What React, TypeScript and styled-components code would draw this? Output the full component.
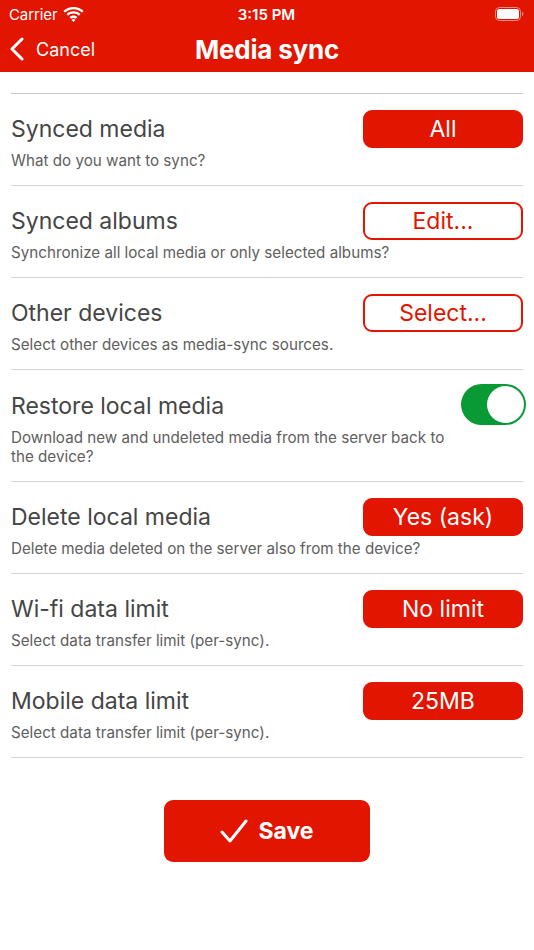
import React, { useState } from 'react';
import styled, { createGlobalStyle } from 'styled-components';

const GlobalStyle = createGlobalStyle`
  html, body {
    margin: 0;
    padding: 0;
    background: #ffffff;
  }
  body {
    font-family: Inter, "Noto Sans", "Liberation Sans", sans-serif;
    -webkit-font-smoothing: antialiased;
  }
  * {
    box-sizing: border-box;
  }
`;

const RED = '#e21500';

const Screen = styled.div`
  width: 534px;
  min-height: 950px;
  display: flex;
  flex-direction: column;
  background: #fff;
`;

const Header = styled.div`
  background: ${RED};
  color: white;
  height: 72px;
  display: flex;
  flex-direction: column;
`;

const StatusBar = styled.div`
  height: 28px;
  display: grid;
  grid-template-columns: 1fr auto 1fr;
  align-items: center;
  padding: 0 10px 0 9px;
  font-size: 15px;
`;

const Carrier = styled.div`
  display: flex;
  align-items: center;
  gap: 6px;
  letter-spacing: -0.1px;
`;

const Clock = styled.div`
  font-weight: 600;
  font-size: 15px;
`;

const BatteryWrap = styled.div`
  justify-self: end;
  display: flex;
  align-items: center;
`;

const NavBar = styled.div`
  flex: 1;
  display: grid;
  grid-template-columns: 1fr auto 1fr;
  align-items: center;
  padding: 0 10px 2px;
`;

const BackButton = styled.button`
  background: none;
  border: none;
  color: white;
  font-family: inherit;
  font-size: 18px;
  display: flex;
  align-items: center;
  gap: 12px;
  padding: 0;
  justify-self: start;
`;

const NavTitle = styled.h1`
  margin: 0;
  font-size: 26px;
  font-weight: 700;
  letter-spacing: -0.2px;
`;

const List = styled.div`
  margin: 21px 11px 0;
  border-top: 1px solid #c9c9c9;
`;

const Row = styled.div`
  padding: 16px 0 15px;
  border-bottom: 1px solid #d4d4d4;
`;

const RowTop = styled.div<{ $tall?: boolean }>`
  display: flex;
  align-items: center;
  justify-content: space-between;
  height: ${p => (p.$tall ? '39px' : '38px')};
`;

const Title = styled.div`
  font-size: 23px;
  color: #454545;
`;

const Subtitle = styled.div`
  margin-top: 3px;
  font-size: 15.2px;
  line-height: 19px;
  color: #5e5e5e;
  max-width: 445px;
`;

const ValueButton = styled.button<{ $outline?: boolean }>`
  width: 160px;
  height: 38px;
  border-radius: 9px;
  font-family: inherit;
  font-size: 23px;
  cursor: pointer;
  background: ${p => (p.$outline ? '#fff' : RED)};
  color: ${p => (p.$outline ? RED : '#fff')};
  border: 2px solid ${RED};
  padding: 0;
`;

const Switch = styled.button<{ $on: boolean }>`
  width: 65px;
  height: 41px;
  flex-shrink: 0;
  border-radius: 21px;
  border: none;
  padding: 2px;
  margin: -2px -3px 0 0;
  background: ${p => (p.$on ? '#0a9a35' : '#e5e5e5')};
  display: flex;
  justify-content: ${p => (p.$on ? 'flex-end' : 'flex-start')};
  cursor: pointer;
`;

const Knob = styled.span`
  width: 37px;
  height: 37px;
  border-radius: 50%;
  background: #fff;
`;

const Footer = styled.div`
  display: flex;
  justify-content: center;
  padding-top: 42px;
`;

const SaveButton = styled.button`
  width: 206px;
  height: 62px;
  border-radius: 9px;
  border: none;
  background: ${RED};
  color: white;
  font-family: inherit;
  font-size: 23px;
  font-weight: 700;
  display: flex;
  align-items: center;
  justify-content: center;
  gap: 10px;
  cursor: pointer;
`;

const WifiIcon = () => (
  <svg width="21" height="15" viewBox="0 0 21 15">
    <path d="M10.5 2.2c3.3 0 6.3 1.3 8.5 3.4l1.6-1.7C18 1.4 14.4 0 10.5 0S3 1.4.4 3.9L2 5.6c2.2-2.1 5.2-3.4 8.5-3.4z" fill="white" />
    <path d="M10.5 6.6c2.1 0 4 .8 5.4 2.1l1.6-1.7c-1.8-1.7-4.3-2.7-7-2.7s-5.2 1-7 2.7l1.6 1.7c1.4-1.3 3.3-2.1 5.4-2.1z" fill="white" />
    <path d="M10.5 10.9c.9 0 1.7.3 2.3.9l1.6-1.7c-1-1-2.4-1.5-3.9-1.5s-2.9.5-3.9 1.5l1.6 1.7c.6-.6 1.4-.9 2.3-.9z" fill="white" />
    <path d="M10.5 15l2-2.1c-.5-.5-1.2-.8-2-.8s-1.5.3-2 .8z" fill="white" />
  </svg>
);

const BatteryIcon = () => (
  <svg width="29" height="14" viewBox="0 0 29 14">
    <rect x="0.5" y="0.5" width="25" height="13" rx="4" fill="none" stroke="rgba(255,255,255,0.5)" />
    <rect x="2" y="2" width="22" height="10" rx="2.5" fill="white" />
    <path d="M27 4.8v4.4c.9-.3 1.5-1.2 1.5-2.2s-.6-1.9-1.5-2.2z" fill="rgba(255,255,255,0.5)" />
  </svg>
);

const Chevron = () => (
  <svg width="14" height="24" viewBox="0 0 14 24">
    <path d="M12 2 2 12l10 10" fill="none" stroke="white" strokeWidth="3" strokeLinecap="round" strokeLinejoin="round" />
  </svg>
);

const Check = () => (
  <svg width="28" height="24" viewBox="0 0 28 24">
    <path d="M2 13l8 9L26 2" fill="none" stroke="white" strokeWidth="3" strokeLinecap="round" strokeLinejoin="round" />
  </svg>
);

interface Setting {
  title: string;
  subtitle: string;
  value?: string;
  outline?: boolean;
  toggle?: boolean;
}

const settings: Setting[] = [
  { title: 'Synced media', subtitle: 'What do you want to sync?', value: 'All' },
  { title: 'Synced albums', subtitle: 'Synchronize all local media or only selected albums?', value: 'Edit...', outline: true },
  { title: 'Other devices', subtitle: 'Select other devices as media-sync sources.', value: 'Select...', outline: true },
  { title: 'Restore local media', subtitle: 'Download new and undeleted media from the server back to the device?', toggle: true },
  { title: 'Delete local media', subtitle: 'Delete media deleted on the server also from the device?', value: 'Yes (ask)' },
  { title: 'Wi-fi data limit', subtitle: 'Select data transfer limit (per-sync).', value: 'No limit' },
  { title: 'Mobile data limit', subtitle: 'Select data transfer limit (per-sync).', value: '25MB' },
];

export default function App() {
  const [restore, setRestore] = useState(true);

  return (
    <Screen>
      <GlobalStyle />
      <Header>
        <StatusBar>
          <Carrier>
            Carrier <WifiIcon />
          </Carrier>
          <Clock>3:15 PM</Clock>
          <BatteryWrap>
            <BatteryIcon />
          </BatteryWrap>
        </StatusBar>
        <NavBar>
          <BackButton>
            <Chevron />
            Cancel
          </BackButton>
          <NavTitle>Media sync</NavTitle>
          <span />
        </NavBar>
      </Header>

      <List>
        {settings.map(s => (
          <Row key={s.title}>
            <RowTop $tall={s.toggle}>
              <Title>{s.title}</Title>
              {s.toggle ? (
                <Switch $on={restore} onClick={() => setRestore(v => !v)}>
                  <Knob />
                </Switch>
              ) : (
                <ValueButton $outline={s.outline}>{s.value}</ValueButton>
              )}
            </RowTop>
            <Subtitle>{s.subtitle}</Subtitle>
          </Row>
        ))}
      </List>

      <Footer>
        <SaveButton>
          <Check />
          Save
        </SaveButton>
      </Footer>
    </Screen>
  );
}
